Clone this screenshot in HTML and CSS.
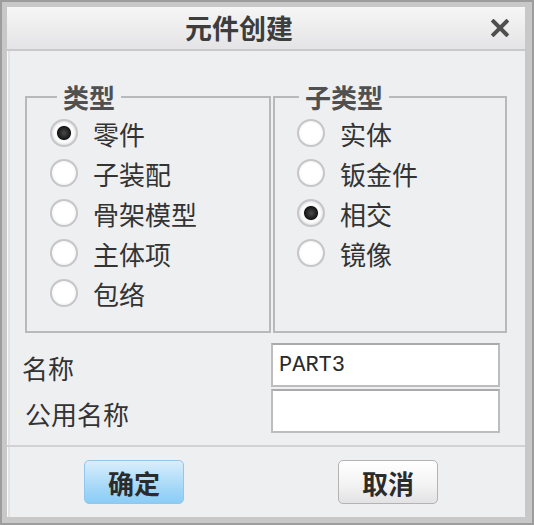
FILE: index.html
```html
<!DOCTYPE html>
<html lang="zh-CN">
<head>
  <meta charset="UTF-8">
  <meta name="viewport" content="width=device-width, initial-scale=1.0">
  <title>元件创建</title>
  <link rel="stylesheet" href="styles.css">
</head>
<body>

  <div class="dialog">
    <div class="window">

      <!-- Заголовок -->
      <div class="titlebar">
        <div class="title">元件创建</div>
        <button class="close" type="button" aria-label="关闭">
          <svg width="18" height="18" viewBox="0 0 18 18">
            <path d="M2.5 2.5 L15.5 15.5 M15.5 2.5 L2.5 15.5" stroke="#4f4f4f" stroke-width="4" stroke-linecap="square"/>
          </svg>
        </button>
      </div>

      <div class="main">
        <div class="groups">
          <fieldset class="group group-type">
            <legend>类型</legend>
            <label class="option"><input type="radio" name="type" checked>零件</label>
            <label class="option"><input type="radio" name="type">子装配</label>
            <label class="option"><input type="radio" name="type">骨架模型</label>
            <label class="option"><input type="radio" name="type">主体项</label>
            <label class="option"><input type="radio" name="type">包络</label>
          </fieldset>
          <fieldset class="group group-subtype">
            <legend>子类型</legend>
            <label class="option"><input type="radio" name="subtype">实体</label>
            <label class="option"><input type="radio" name="subtype">钣金件</label>
            <label class="option"><input type="radio" name="subtype" checked>相交</label>
            <label class="option"><input type="radio" name="subtype">镜像</label>
          </fieldset>
        </div>

        <div class="fields">
          <label class="field-label" for="name">名称</label>
          <input class="field" id="name" type="text" value="PART3">
          <label class="field-label field-label-common" for="common">公用名称</label>
          <input class="field" id="common" type="text">
        </div>
      </div>

      <!-- Кнопки -->
      <div class="footer">
        <button class="btn btn-ok" type="button">确定</button>
        <button class="btn btn-cancel" type="button">取消</button>
      </div>

    </div>
  </div>

</body>
</html>
```

FILE: styles.css
```css
* {
  box-sizing: border-box;
}
body {
  margin: 0;
  font-family: "Noto Sans CJK SC", "Noto Sans", sans-serif;
  color: #333333;
}
.dialog {
  width: 534px;
  height: 525px;
  border: 2px solid #9d9d9d;
  background: #c8c8c8;
  padding: 5px 7px 6px 5px;
}
.window {
  height: 100%;
  background: #eeeff1;
  box-shadow: inset 1px 0 0 #fafafa, inset 3px 0 0 #e2e2e2;
  display: flex;
  flex-direction: column;
}
.titlebar {
  height: 44px;
  display: flex;
  align-items: center;
  background: linear-gradient(to bottom, #f6f6f6, #e4e4e6);
  border-bottom: 2px solid #c9c9cb;
}
.title {
  flex: 1;
  text-align: center;
  font-size: 27px;
  font-weight: bold;
  color: #3d3d3d;
  line-height: 42px;
}
.close {
  width: 54px;
  height: 42px;
  padding: 0 16px 0 0;
  border: none;
  background: none;
  display: flex;
  align-items: center;
  justify-content: flex-end;
}
.main {
  height: 394px;
  padding: 31px 18px 0 18px;
}
.groups {
  display: grid;
  grid-template-columns: 246px 234px;
  column-gap: 2px;
  height: 251px;
}
.group {
  margin: 0;
  min-width: 0;
  border: 2px solid #b9b9bb;
  padding: 1px 0 0 23px;
}
.group-subtype {
  padding-left: 22px;
}
.group legend {
  font-size: 26px;
  font-weight: bold;
  line-height: 30px;
  color: #505050;
  padding: 0 6px;
  margin-left: 7px;
}
.group-subtype legend {
  margin-left: 2px;
}
.option {
  display: flex;
  align-items: center;
  gap: 15px;
  height: 40px;
  font-size: 26px;
}
.option input {
  appearance: none;
  margin: 0;
  width: 28px;
  height: 28px;
  border-radius: 50%;
  border: 2px solid #c6c6c8;
  background: radial-gradient(circle, #ffffff 55%, #e6e6e8 100%);
}
.option input:checked {
  background: radial-gradient(circle, #4a4a4a 0, #2a2a2a 4px, #141414 6.5px, #f4f4f4 7.5px, #ffffff 9px, #e4e4e6 12px);
}
.fields {
  display: grid;
  grid-template-columns: 1fr 229px;
  row-gap: 2px;
  margin: 10px 7px 0 -3px;
}
.field-label {
  align-self: center;
  padding-top: 4px;
  font-size: 26px;
  color: #333333;
}
.field-label-common {
  padding-left: 3px;
}
.field {
  height: 44px;
  margin: 0;
  border: 2px solid #bdbdbf;
  border-top-color: #aaaaac;
  background: #ffffff;
  padding: 0 6px;
  font-family: "Liberation Mono", monospace;
  font-size: 22px;
  color: #2a2a2a;
  outline: none;
}
.footer {
  flex: 1;
  display: flex;
  align-items: center;
  gap: 154px;
  padding-left: 77px;
  border-top: 2px solid #d2d2d4;
}
.btn {
  width: 100px;
  height: 44px;
  border-radius: 5px;
  font-family: "Noto Sans CJK SC", sans-serif;
  font-size: 26px;
  font-weight: bold;
  color: #2b2b2b;
  padding: 0;
}
.btn-ok {
  border: 1px solid #93c6ea;
  background: linear-gradient(to bottom, #d9eefc, #9fd5f7 70%, #8ccdf6);
}
.btn-cancel {
  border: 1px solid #b3b3b5;
  background: linear-gradient(to bottom, #ffffff, #f2f2f2 60%, #e2e2e4);
}
```
